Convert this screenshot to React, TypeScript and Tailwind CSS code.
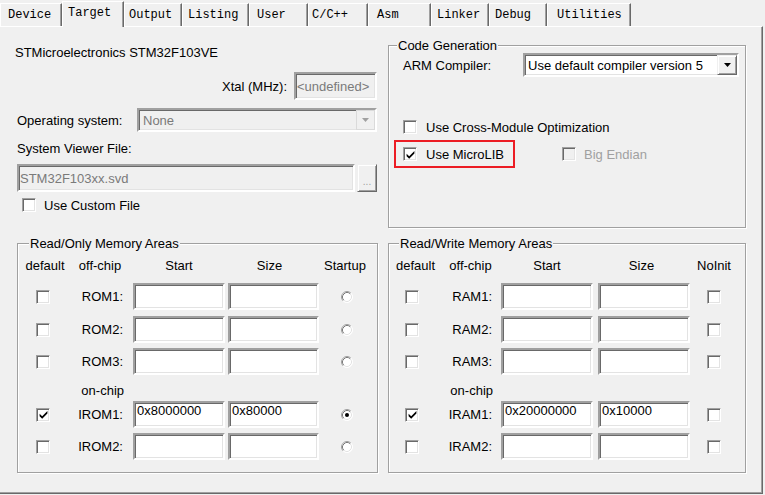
import React from "react";

const SUNKEN =
  "border-2 border-t-[#a0a0a0] border-l-[#a0a0a0] border-r-white border-b-white shadow-[inset_1px_1px_0_#696969,inset_-1px_-1px_0_#e3e3e3]";
const RAISED =
  "border border-t-[#f0f0f0] border-l-[#f0f0f0] border-r-[#696969] border-b-[#696969] shadow-[inset_1px_1px_0_#ffffff,inset_-1px_-1px_0_#a0a0a0] bg-[#f0f0f0]";
const GROUP =
  "relative border border-[#a0a0a0] shadow-[1px_1px_0_#ffffff,inset_1px_1px_0_#ffffff]";

function Check({ checked = false, disabled = false }: { checked?: boolean; disabled?: boolean }) {
  return (
    <span
      className={`flex h-[14px] w-[14px] shrink-0 items-center justify-center border border-t-[#a0a0a0] border-l-[#a0a0a0] border-r-white border-b-white shadow-[inset_1px_1px_0_#696969,inset_-1px_-1px_0_#e3e3e3] ${
        disabled ? "bg-[#f0f0f0]" : "bg-white"
      }`}
    >
      {checked && (
        <svg width="9" height="9" viewBox="0 0 9 9">
          <path d="M0.6 3.8 L3.2 6.3 L8.4 1.1 L8.4 3.6 L3.2 8.8 L0.6 6.3 Z" fill="#000" />
        </svg>
      )}
    </span>
  );
}

function Radio({ checked = false }: { checked?: boolean }) {
  return (
    <svg width="12" height="12" viewBox="0 0 12 12" className="shrink-0">
      <circle cx="6" cy="6" r="5.5" fill="#ffffff" />
      <path d="M2.11 9.89 A5.5 5.5 0 0 1 9.89 2.11" stroke="#a0a0a0" fill="none" />
      <path d="M9.89 2.11 A5.5 5.5 0 0 1 2.11 9.89" stroke="#ffffff" fill="none" />
      <path d="M2.82 9.18 A4.5 4.5 0 0 1 9.18 2.82" stroke="#7a7a7a" fill="none" />
      <path d="M9.18 2.82 A4.5 4.5 0 0 1 2.82 9.18" stroke="#e3e3e3" fill="none" />
      {checked && <circle cx="6" cy="6" r="2" fill="#000" />}
    </svg>
  );
}

function Arrow({ color = "#000" }: { color?: string }) {
  return (
    <svg width="7" height="4" viewBox="0 0 7 4">
      <polygon points="0,0 7,0 3.5,4" fill={color} />
    </svg>
  );
}

const tabs = [
  { label: "Device", cls: "w-[62px] pl-[7px]" },
  { label: "Target", cls: "w-[62px] pl-[5px]", sel: true },
  { label: "Output", cls: "w-[58px] pl-[4px]" },
  { label: "Listing", cls: "w-[67px] pl-[5px]" },
  { label: "User", cls: "w-[59px] pl-[7px]" },
  { label: "C/C++", cls: "w-[60px] pl-[3px]" },
  { label: "Asm", cls: "w-[63px] pl-[8px]" },
  { label: "Linker", cls: "w-[58px] pl-[5px]" },
  { label: "Debug", cls: "w-[58px] pl-[5px]" },
  { label: "Utilities", cls: "w-[84px] pl-[9px]" },
];

function MemInput({ w, value }: { w: string; value?: string }) {
  return (
    <div className={`h-[27px] shrink-0 bg-white pl-[2px] leading-[15px] ${SUNKEN} ${w}`}>
      {value}
    </div>
  );
}

type Row = { label: string; start?: string; size?: string; def?: boolean };

function LeftRow({ r, mt }: { r: Row & { radio?: boolean }; mt: string }) {
  return (
    <div className={`flex h-[27px] items-center ${mt}`}>
      <div className="flex w-[50px] justify-center">
        <Check checked={r.def} />
      </div>
      <div className="w-[58px] pr-[3px] text-right">{r.label}</div>
      <div className="ml-[7px]">
        <MemInput w="w-[92px]" value={r.start} />
      </div>
      <div className="ml-[3px]">
        <MemInput w="w-[91px]" value={r.size} />
      </div>
      <div className="flex w-[55px] justify-center">
        <Radio checked={r.radio} />
      </div>
    </div>
  );
}

function RightRow({ r, mt }: { r: Row; mt: string }) {
  return (
    <div className={`flex h-[27px] items-center ${mt}`}>
      <div className="flex w-[46px] justify-center">
        <Check checked={r.def} />
      </div>
      <div className="w-[60px] pr-[3px] text-right">{r.label}</div>
      <div className="ml-[6px]">
        <MemInput w="w-[92px]" value={r.start} />
      </div>
      <div className="ml-[5px]">
        <MemInput w="w-[92px]" value={r.size} />
      </div>
      <div className="flex w-[48px] justify-center">
        <Check />
      </div>
    </div>
  );
}

export default function App() {
  return (
    <div className="h-[495px] w-[765px] overflow-hidden bg-[#f0f0f0] font-['Liberation_Sans',Arial,sans-serif] text-[13px] leading-[15px] text-black">
      {/* Tab strip */}
      <div className="flex h-[26px] items-end font-['Liberation_Mono','Courier_New',monospace] text-[12px] leading-[14px]">
        {tabs.map((t) =>
          t.sel ? (
            <div
              key={t.label}
              className={`relative z-10 -mb-px flex h-[26px] shrink-0 items-start border-l border-t border-r border-l-white border-t-white border-r-[#696969] bg-[#f0f0f0] pt-[4px] shadow-[inset_-1px_0_0_#a0a0a0] ${t.cls}`}
            >
              {t.label}
            </div>
          ) : (
            <div
              key={t.label}
              className={`flex h-[23px] shrink-0 items-start border-l border-t border-r border-l-white border-t-white border-r-[#696969] pt-[4px] shadow-[inset_-1px_0_0_#a0a0a0] ${t.cls}`}
            >
              {t.label}
            </div>
          )
        )}
      </div>

      {/* Panel */}
      <div className="h-[468px] w-[763px] border-t border-r border-b border-t-white border-r-[#696969] border-b-[#696969] shadow-[inset_-1px_-1px_0_#a0a0a0]">
        <div className="flex pl-[15px]">
          {/* Left top */}
          <div className="flex w-[362px] flex-col">
            <div className="mt-[18px]">STMicroelectronics STM32F103VE</div>
            <div className="mt-[12px] flex h-[28px] items-center justify-end gap-[7px]">
              <span>Xtal (MHz):</span>
              <div className={`flex h-[28px] w-[83px] items-center bg-[#f0f0f0] pl-[1px] text-[#7a7a7a] ${SUNKEN}`}>
                &lt;undefined&gt;
              </div>
            </div>
            <div className="mt-[8px] flex h-[24px] items-center pl-[2px]">
              <span className="w-[120px]">Operating system:</span>
              <div className={`flex h-[24px] w-[240px] items-center bg-[#f0f0f0] pl-[4px] text-[#7a7a7a] ${SUNKEN}`}>
                <span className="flex-1">None</span>
                <div className="flex h-[20px] w-[19px] items-center justify-center border border-[#dadada] bg-[#f0f0f0]">
                  <Arrow color="#a0a0a0" />
                </div>
              </div>
            </div>
            <div className="mt-[9px] pl-[2px]">System Viewer File:</div>
            <div className="mt-[8px] flex h-[28px] pl-[2px]">
              <div className={`flex h-[28px] w-[338px] items-center bg-[#f0f0f0] pl-[1px] text-[#7a7a7a] ${SUNKEN}`}>
                STM32F103xx.svd
              </div>
              <div className={`ml-[2px] flex h-[28px] w-[20px] items-end justify-center pb-[4px] text-[10px] leading-[10px] text-[#a0a0a0] ${RAISED}`}>
                ...
              </div>
            </div>
            <div className="mt-[6px] flex h-[14px] items-center pl-[7px]">
              <Check />
              <span className="ml-[8px]">Use Custom File</span>
            </div>
          </div>

          {/* Code Generation group */}
          <div className={`ml-[11px] mt-[18px] h-[183px] w-[358px] ${GROUP}`}>
            <span className="absolute -top-[8px] left-[8px] bg-[#f0f0f0] px-[1px]">Code Generation</span>
            <div className="mt-[7px] flex h-[24px] items-center justify-between pl-[14px] pr-[6px]">
              <span>ARM Compiler:</span>
              <div className={`flex h-[24px] w-[216px] items-center bg-white pl-[3px] ${SUNKEN}`}>
                <span className="flex-1">Use default compiler version 5</span>
                <div className={`flex h-[20px] w-[20px] items-center justify-center ${RAISED}`}>
                  <Arrow />
                </div>
              </div>
            </div>
            <div className="mt-[43px] flex h-[14px] items-center pl-[14px]">
              <Check />
              <span className="ml-[9px]">Use Cross-Module Optimization</span>
            </div>
            <div className="mt-[6px] flex h-[28px] items-center pl-[5px]">
              <div className="flex h-[28px] w-[121px] items-center border-2 border-[#ec1c24] pl-[7px]">
                <Check checked />
                <span className="ml-[9px]">Use MicroLIB</span>
              </div>
              <div className="ml-[47px] flex items-center">
                <Check disabled />
                <span className="ml-[8px] text-[#a0a0a0]">Big Endian</span>
              </div>
            </div>
          </div>
        </div>

        {/* Memory groups */}
        <div className="mt-[15px] flex pl-[17px]">
          <div className={`h-[230px] w-[361px] ${GROUP}`}>
            <span className="absolute -top-[8px] left-[11px] bg-[#f0f0f0] px-[1px]">Read/Only Memory Areas</span>
            <div className="mt-[14px] flex">
              <div className="w-[50px] pl-[4px] text-center">default</div>
              <div className="w-[58px] pl-[6px] text-center">off-chip</div>
              <div className="ml-[7px] w-[92px] text-center">Start</div>
              <div className="ml-[3px] w-[91px] pr-[8px] text-center">Size</div>
              <div className="w-[57px] pr-[5px] text-center">Startup</div>
            </div>
            <LeftRow mt="mt-[10px]" r={{ label: "ROM1:" }} />
            <LeftRow mt="mt-[6px]" r={{ label: "ROM2:" }} />
            <LeftRow mt="mt-[5px]" r={{ label: "ROM3:" }} />
            <div className="mt-[8px] flex">
              <div className="w-[50px]" />
              <div className="w-[58px] pr-[2px] text-right">on-chip</div>
            </div>
            <LeftRow mt="mt-[3px]" r={{ label: "IROM1:", start: "0x8000000", size: "0x80000", def: true, radio: true }} />
            <LeftRow mt="mt-[5px]" r={{ label: "IROM2:" }} />
          </div>

          <div className={`ml-[10px] h-[230px] w-[358px] ${GROUP}`}>
            <span className="absolute -top-[8px] left-[10px] bg-[#f0f0f0] px-[1px]">Read/Write Memory Areas</span>
            <div className="mt-[14px] flex">
              <div className="w-[46px] pl-[7px] text-center">default</div>
              <div className="w-[60px] pl-[11px] text-center">off-chip</div>
              <div className="ml-[6px] w-[92px] text-center">Start</div>
              <div className="ml-[5px] w-[92px] pr-[5px] text-center">Size</div>
              <div className="w-[48px] text-center">NoInit</div>
            </div>
            <RightRow mt="mt-[10px]" r={{ label: "RAM1:" }} />
            <RightRow mt="mt-[6px]" r={{ label: "RAM2:" }} />
            <RightRow mt="mt-[5px]" r={{ label: "RAM3:" }} />
            <div className="mt-[8px] flex">
              <div className="w-[46px]" />
              <div className="w-[60px] pr-[2px] text-right">on-chip</div>
            </div>
            <RightRow mt="mt-[3px]" r={{ label: "IRAM1:", start: "0x20000000", size: "0x10000", def: true }} />
            <RightRow mt="mt-[5px]" r={{ label: "IRAM2:" }} />
          </div>
        </div>
      </div>
    </div>
  );
}
